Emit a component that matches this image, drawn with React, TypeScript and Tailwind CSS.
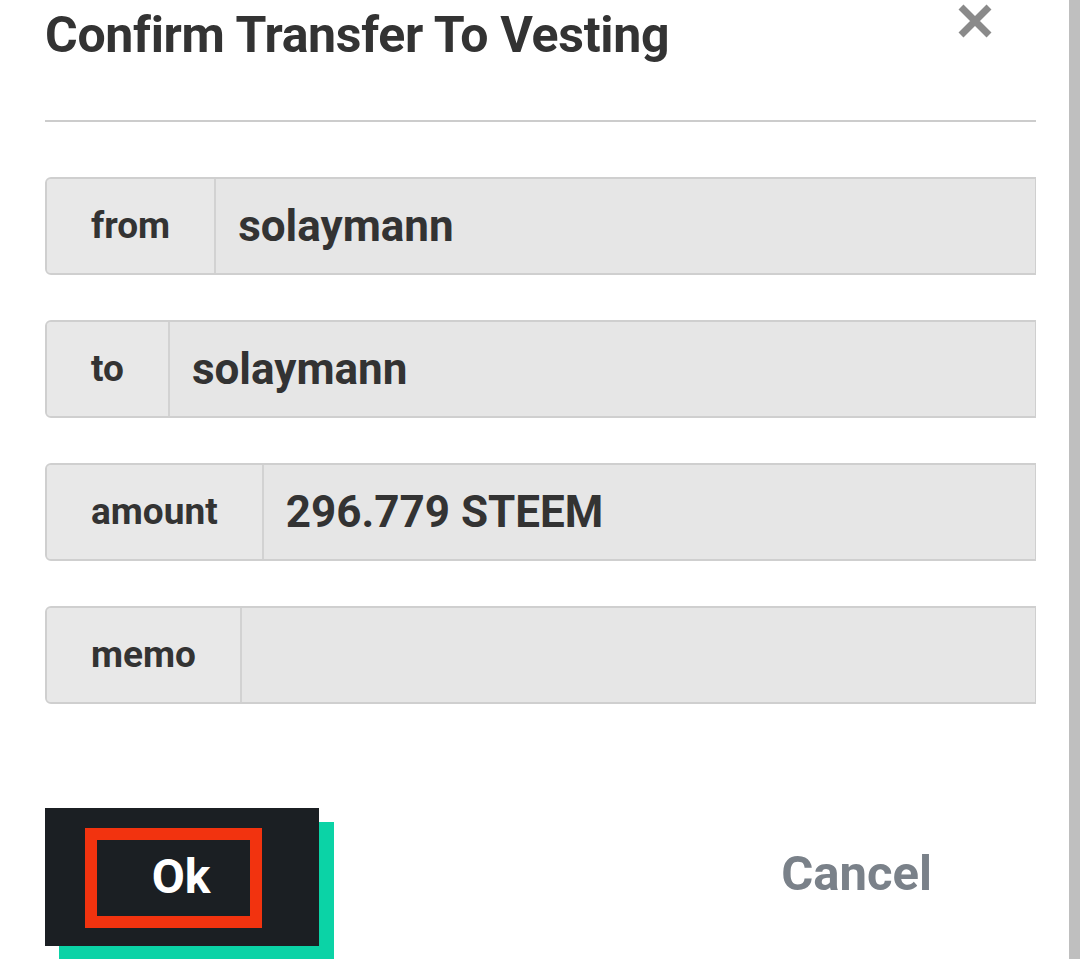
import React from "react";

const ROWS = [
  { label: "from", value: "solaymann" },
  { label: "to", value: "solaymann" },
  { label: "amount", value: "296.779 STEEM" },
  { label: "memo", value: "" },
];

function CloseIcon() {
  return (
    <svg width="36" height="34" viewBox="0 0 36 34" className="block">
      <path d="M4 3 L32 31 M32 3 L4 31" stroke="#8a8a8a" strokeWidth="7" strokeLinecap="butt" />
    </svg>
  );
}

export default function App() {
  return (
    <div className="flex h-[959px] w-[1080px] overflow-hidden bg-white font-['Roboto',sans-serif] text-[#333]">
      <div className="flex w-[1036px] flex-col pl-[45px]">
        {/* Header */}
        <div className="flex h-[121px] items-start justify-between">
          <h1 className="mt-[5px] text-[50px] font-bold leading-[60px] tracking-[-0.3px]">
            Confirm Transfer To Vesting
          </h1>
          <button className="mr-[43px] mt-[4px]">
            <CloseIcon />
          </button>
        </div>
        <div className="h-[2px] bg-[#cccccc]" />

        {/* Fields */}
        <div className="mt-[55px] flex flex-col gap-[45px]">
          {ROWS.map((row) => (
            <div
              key={row.label}
              className="flex h-[98px] overflow-hidden rounded-l-[6px] border-2 border-r border-[#cfcfcf] bg-[#e6e6e6]"
            >
              <div className="flex items-center border-r-2 border-[#d2d2d2] bg-[#e8e8e8] px-[44px] text-[37px] font-bold">
                {row.label}
              </div>
              <div className="flex flex-1 items-center pl-[22px] text-[44px] font-bold">
                {row.value}
              </div>
            </div>
          ))}
        </div>

        {/* Footer */}
        <div className="mt-[104px] flex items-start justify-between">
          <div className="relative h-[151px] w-[289px]">
            <div className="absolute left-[14px] top-[14px] h-[140px] w-[275px] bg-[#0bd3a6]" />
            <div className="relative flex h-[138px] w-[274px] items-center justify-center bg-[#1b1f23] text-[48px] font-bold text-white">
              <span className="ml-[-2px]">Ok</span>
              <div className="absolute left-[40px] top-[20px] h-[100px] w-[177px] border-[12px] border-[#f2330f]" />
            </div>
          </div>
          <button className="mr-[104px] mt-[36px] text-[49px] font-bold leading-[60px] text-[#7a8189]">
            Cancel
          </button>
        </div>
      </div>
      <div className="ml-auto h-full w-[11px] bg-[#bfbfbf]" />
    </div>
  );
}
